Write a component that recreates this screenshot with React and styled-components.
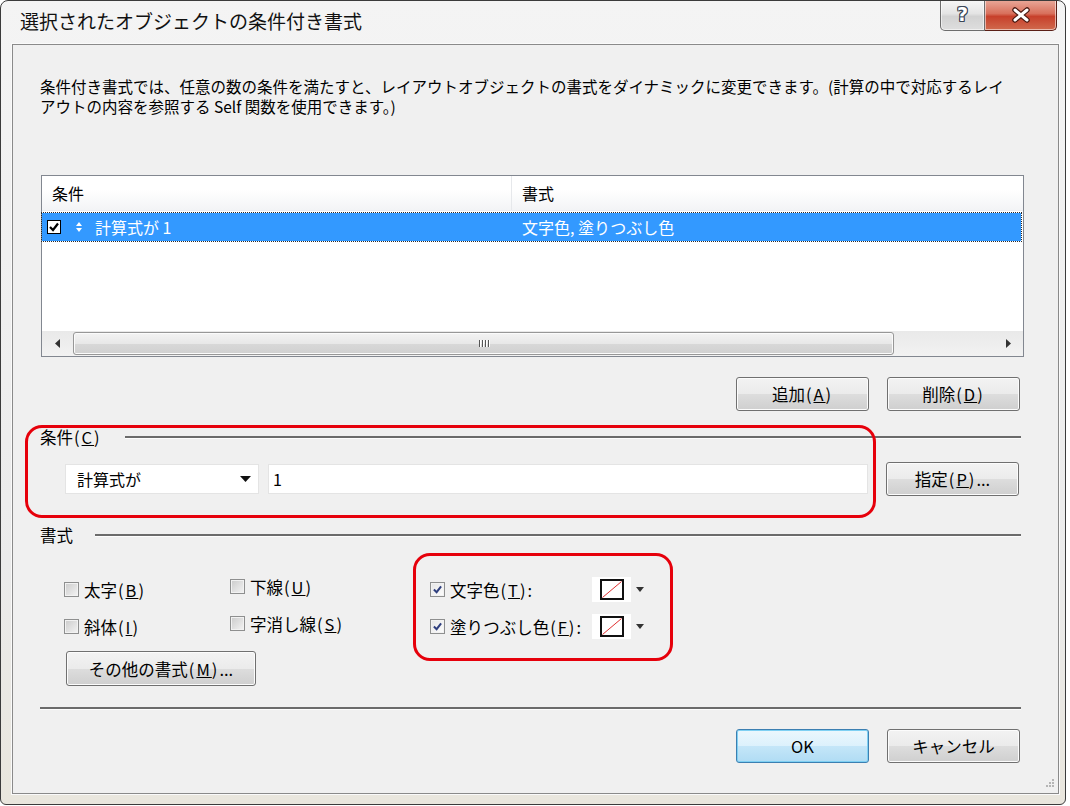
import React from 'react'
import styled, { createGlobalStyle } from 'styled-components'

const GlobalStyle = createGlobalStyle`
  html, body { margin: 0; padding: 0; background: #fff; }
  body { font-family: "Noto Sans CJK JP", "Noto Sans", sans-serif; color: #000; }
  * { box-sizing: border-box; }
`

const FONT = `"Noto Sans CJK JP", "Noto Sans", sans-serif`

const Window = styled.div`
  width: 1066px;
  height: 805px;
  border: 1px solid #3b3b3b;
  border-radius: 8px 8px 6px 6px;
  background: linear-gradient(#f4f4f4, #ebebeb 70%, #e9e6dd);
  padding: 0 6px 10px 11px;
  display: flex;
  flex-direction: column;
  overflow: hidden;
`

const TitleBar = styled.div`
  height: 43px;
  display: flex;
  justify-content: space-between;
  align-items: flex-start;
`

const Title = styled.div`
  margin: 7px 0 0 8px;
  font-size: 19px;
  line-height: 26px;
  color: #111;
`

const Caption = styled.div`
  display: flex;
  margin: -1px 2px 0 0;
`

const CapButton = styled.div`
  height: 31px;
  width: ${p => p.$w}px;
  display: flex;
  align-items: center;
  justify-content: center;
  border: 1px solid ${p => (p.$close ? '#5a1f16' : '#6d6d6d')};
  border-top: none;
  border-radius: ${p => (p.$close ? '0 0 5px 0' : '0 0 0 5px')};
  border-left: ${p => (p.$close ? 'none' : '1px solid #6d6d6d')};
  background: ${p =>
    p.$close
      ? 'linear-gradient(#e9a99a, #d8705c 45%, #c7402b 55%, #d06a4d)'
      : 'linear-gradient(#f7f7f7, #e4e4e4 45%, #d2d2d2 55%, #dedede)'};
  box-shadow: inset 0 0 0 1px rgba(255, 255, 255, 0.55);
`

const HelpGlyph = styled.span`
  font: bold 19px "DejaVu Sans", sans-serif;
  color: #fff;
  text-shadow: 1px 0 0 #3a4656, -1px 0 0 #3a4656, 0 1px 0 #3a4656, 0 -1px 0 #3a4656,
    1px 1px 0 #3a4656, -1px -1px 0 #3a4656, 1px -1px 0 #3a4656, -1px 1px 0 #3a4656;
  margin-top: -3px;
`

const Client = styled.div`
  flex: 1;
  position: relative;
  border: 1px solid #8a8a8a;
  box-shadow: 0 0 0 1px #fafafa;
  background: #f0f0f0;
  display: flex;
  flex-direction: column;
`

const Description = styled.div`
  margin: 31px 0 0 27px;
  font-size: 15.5px;
  line-height: 20px;
  span { display: block; white-space: nowrap; }
`

const ListBox = styled.div`
  margin: 59px 0 0 28px;
  width: 983px;
  height: 182px;
  border: 1px solid #828790;
  background: #fff;
  display: flex;
  flex-direction: column;
`

const Columns = styled.div`
  display: grid;
  grid-template-columns: 470px 1fr;
  align-items: center;
`

const ListHeader = styled(Columns)`
  height: 35px;
  background: linear-gradient(#fff, #fff 40%, #f3f4f6);
  border-bottom: 1px solid #eceef1;
  font-size: 16px;
`

const HeaderCell = styled.div`
  height: 100%;
  display: flex;
  align-items: center;
  padding-left: 10px;
  border-right: ${p => (p.$last ? 'none' : '1px solid #e6e8eb')};
`

const ListRow = styled(Columns)`
  margin: 2px 2px 0 0;
  height: 28px;
  background: #3399ff;
  color: #fff;
  outline: 1px dotted #2a2a2a;
  font-size: 16px;
`

const RowCell = styled.div`
  display: flex;
  align-items: center;
  padding-left: ${p => p.$pad}px;
`

const RowCheck = styled.span`
  width: 14px;
  height: 14px;
  border: 1px solid #000;
  background: #fff;
  display: flex;
  align-items: center;
  justify-content: center;
  margin-right: 15px;
`

const SortGlyph = styled.svg`
  margin-right: 13px;
`

const ListFill = styled.div`
  flex: 1;
`

const HScroll = styled.div`
  height: 25px;
  background: linear-gradient(#e9e9e9, #f2f2f2);
  display: flex;
  align-items: center;
`

const ScrollArrow = styled.div`
  width: ${p => p.$w}px;
  height: 100%;
  display: flex;
  align-items: center;
  justify-content: center;
`

const Thumb = styled.div`
  width: 821px;
  height: 23px;
  margin-left: 1px;
  border: 1px solid #979797;
  border-radius: 3px;
  background: linear-gradient(#f3f3f3, #e8e8e8 50%, #d8d8d8 51%, #d0d0d0);
  box-shadow: inset 0 0 0 1px #fbfbfb;
  display: flex;
  align-items: center;
  justify-content: center;
  gap: 2px;
`

const Grip = styled.span`
  width: 1px;
  height: 7px;
  background: #555;
  box-shadow: 1px 0 0 #fff;
`

const Track = styled.div`
  flex: 1;
`

const ButtonRow = styled.div`
  display: flex;
  justify-content: flex-end;
  gap: 18px;
  margin: ${p => p.$top}px 38px 0 0;
`

const Button = styled.button`
  width: ${p => p.$w || 133}px;
  height: ${p => p.$h || 34}px;
  padding: 0;
  border: 1px solid ${p => (p.$default ? '#3c7fb1' : '#707070')};
  border-radius: 3px;
  background: ${p =>
    p.$default
      ? 'linear-gradient(#ecf7fd, #dcf1fc 50%, #c4e6f8 51%, #b0dcf4)'
      : 'linear-gradient(#f3f3f3, #ebebeb 50%, #dddddd 51%, #cfcfcf)'};
  box-shadow: inset 0 0 0 1px ${p => (p.$default ? '#7fd0f3' : '#fcfcfc')};
  font: 16.5px ${FONT};
  color: #000;
  flex-shrink: 0;
`

const SectionHeader = styled.div`
  display: flex;
  align-items: center;
  margin: ${p => p.$top}px 37px 0 27px;
  height: 20px;
`

const SectionLabel = styled.div`
  width: ${p => p.$w}px;
  font-size: 16.5px;
  line-height: 20px;
  flex-shrink: 0;
`

const Rule = styled.div`
  flex: 1;
  height: 2px;
  background: #6b6b6b;
  box-shadow: 0 1px 0 #fdfdfd;
`

const CondRow = styled.div`
  display: flex;
  align-items: center;
  height: 34px;
  margin: 15px 0 0 52px;
`

const Combo = styled.div`
  width: 194px;
  height: 30px;
  background: #fff;
  border: 1px solid #e4e4e4;
  display: flex;
  align-items: center;
  justify-content: space-between;
  padding: 0 7px 0 11px;
  font-size: 16px;
`

const TextField = styled.div`
  width: 600px;
  height: 30px;
  margin: 0 18px 0 9px;
  background: #fff;
  border: 1px solid #e4e4e4;
  display: flex;
  align-items: center;
  padding-left: 4px;
  font-size: 16px;
`

const Options = styled.div`
  display: grid;
  grid-template-columns: 166px 200px auto;
  grid-auto-rows: 37px;
  margin: 26px 0 0 51px;
`

const Check = styled.label`
  display: flex;
  align-items: center;
  font-size: 16.5px;
  transform: translateY(${p => p.$dy || 0}px);
`

const Box = styled.span`
  width: 15px;
  height: 15px;
  margin-right: ${p => p.$gap || 5}px;
  border: 1px solid #8e8f8f;
  background: ${p => (p.$on ? 'linear-gradient(135deg, #e6e6e6, #fdfdfd)' : 'linear-gradient(135deg, #cbcbcb, #f4f4f4)')};
  box-shadow: inset 0 0 0 1px #f2f2f2;
  display: flex;
  align-items: center;
  justify-content: center;
  flex-shrink: 0;
`

const ColorLabel = styled.span`
  width: 142px;
  white-space: nowrap;
`

const Swatch = styled.span`
  width: 39px;
  height: 25px;
  background: #fff;
  display: flex;
  align-items: center;
  justify-content: center;
`

const DropArrow = styled.svg`
  margin-left: 5px;
`

const MoreButton = styled(Button)`
  grid-column: 1 / span 2;
  justify-self: start;
  margin: 6px 0 0 2px;
`

const BottomRule = styled(Rule)`
  flex: none;
  margin: 25px 37px 0 27px;
`

const Annotation = styled.div`
  position: absolute;
  left: ${p => p.$x}px;
  top: ${p => p.$y}px;
  width: ${p => p.$w}px;
  height: ${p => p.$h}px;
  border: 3px solid #e6000b;
  border-radius: 17px;
  pointer-events: none;
`

const SizeGrip = styled.svg`
  position: absolute;
  right: 3px;
  bottom: 3px;
`

const Paren = styled.span`
  letter-spacing: 2px;
  margin-left: 1px;
`

const Mn = ({ k }) => (
  <Paren>
    (<u>{k}</u>)
  </Paren>
)

const Tick = ({ color = '#000', size = 10 }) => (
  <svg width={size} height={size} viewBox="0 0 10 10">
    <path d="M1 5 L4 8 L9 1.5" fill="none" stroke={color} strokeWidth="2.2" />
  </svg>
)

const Down = () => (
  <svg width="11" height="6" viewBox="0 0 11 6">
    <path d="M0 0 H11 L5.5 6 Z" fill="#111" />
  </svg>
)

function CheckItem({ on, label, k, dy }) {
  return (
    <Check $dy={dy}>
      <Box $on={on}>{on && <Tick color="#2f3f7e" size={9} />}</Box>
      {label}
      <Mn k={k} />
    </Check>
  )
}

function ColorItem({ label, k }) {
  return (
    <Check>
      <Box $on $gap={5}>
        <Tick color="#2f3f7e" size={9} />
      </Box>
      <ColorLabel>
        {label}
        <Mn k={k} />:
      </ColorLabel>
      <Swatch>
        <svg width="24" height="21" viewBox="0 0 24 21">
          <rect x="1" y="1" width="22" height="19" fill="#fff" stroke="#111" strokeWidth="2" />
          <path d="M2.5 18.5 L21.5 2.5" stroke="#e03030" strokeWidth="1" />
        </svg>
      </Swatch>
      <DropArrow width="8" height="5" viewBox="0 0 8 5">
        <path d="M0 0 H8 L4 5 Z" fill="#333" />
      </DropArrow>
    </Check>
  )
}

export default function App() {
  return (
    <>
      <GlobalStyle />
      <Window>
        <TitleBar>
          <Title>選択されたオブジェクトの条件付き書式</Title>
          <Caption>
            <CapButton $w={45}>
              <HelpGlyph>?</HelpGlyph>
            </CapButton>
            <CapButton $w={72} $close>
              <svg width="20" height="16" viewBox="0 0 20 16">
                <path d="M4 3 L16 13 M16 3 L4 13" stroke="#4a1a12" strokeWidth="5.5" strokeLinecap="round" />
                <path d="M4 3 L16 13 M16 3 L4 13" stroke="#fff" strokeWidth="3" strokeLinecap="round" />
              </svg>
            </CapButton>
          </Caption>
        </TitleBar>

        <Client>
          <Description>
            <span>条件付き書式では、任意の数の条件を満たすと、レイアウトオブジェクトの書式をダイナミックに変更できます。(計算の中で対応するレイ</span>
            <span>アウトの内容を参照する Self 関数を使用できます。)</span>
          </Description>

          <ListBox>
            <ListHeader>
              <HeaderCell>条件</HeaderCell>
              <HeaderCell $last>書式</HeaderCell>
            </ListHeader>
            <ListRow>
              <RowCell $pad={5}>
                <RowCheck>
                  <Tick />
                </RowCheck>
                <SortGlyph width="6" height="10" viewBox="0 0 6 10">
                  <path d="M3 0 L6 4 H0 Z M3 10 L6 6 H0 Z" fill="#fff" />
                </SortGlyph>
                計算式が 1
              </RowCell>
              <RowCell $pad={10}>文字色, 塗りつぶし色</RowCell>
            </ListRow>
            <ListFill />
            <HScroll>
              <ScrollArrow $w={30}>
                <svg width="5" height="9" viewBox="0 0 5 9">
                  <path d="M5 0 V9 L0 4.5 Z" fill="#333" />
                </svg>
              </ScrollArrow>
              <Thumb>
                <Grip />
                <Grip />
                <Grip />
                <Grip />
              </Thumb>
              <Track />
              <ScrollArrow $w={30}>
                <svg width="5" height="9" viewBox="0 0 5 9">
                  <path d="M0 0 V9 L5 4.5 Z" fill="#333" />
                </svg>
              </ScrollArrow>
            </HScroll>
          </ListBox>

          <ButtonRow $top={20}>
            <Button>
              追加<Mn k="A" />
            </Button>
            <Button>
              削除<Mn k="D" />
            </Button>
          </ButtonRow>

          <SectionHeader $top={16}>
            <SectionLabel $w={85}>
              条件<Mn k="C" />
            </SectionLabel>
            <Rule />
          </SectionHeader>

          <CondRow>
            <Combo>
              計算式が
              <Down />
            </Combo>
            <TextField>1</TextField>
            <Button>
              指定<Mn k="P" />...
            </Button>
          </CondRow>

          <SectionHeader $top={29}>
            <SectionLabel $w={55}>書式</SectionLabel>
            <Rule />
          </SectionHeader>

          <Options>
            <CheckItem label="太字" k="B" />
            <CheckItem label="下線" k="U" dy={-3} />
            <ColorItem label="文字色" k="T" />
            <CheckItem label="斜体" k="I" />
            <CheckItem label="字消し線" k="S" dy={-3} />
            <ColorItem label="塗りつぶし色" k="F" />
            <MoreButton $w={190} $h={35}>
              その他の書式<Mn k="M" />...
            </MoreButton>
          </Options>

          <BottomRule />

          <ButtonRow $top={20}>
            <Button $default>OK</Button>
            <Button>キャンセル</Button>
          </ButtonRow>

          <Annotation $x={12} $y={380} $w={851} $h={93} />
          <Annotation $x={400} $y={508} $w={260} $h={108} />

          <SizeGrip width="12" height="12" viewBox="0 0 12 12">
            {[
              [9, 1],
              [6, 4],
              [9, 4],
              [3, 7],
              [6, 7],
              [9, 7],
            ].map(([x, y]) => (
              <rect key={`${x}-${y}`} x={x} y={y} width="2" height="2" fill="#b5b5b5" />
            ))}
          </SizeGrip>
        </Client>
      </Window>
    </>
  )
}
